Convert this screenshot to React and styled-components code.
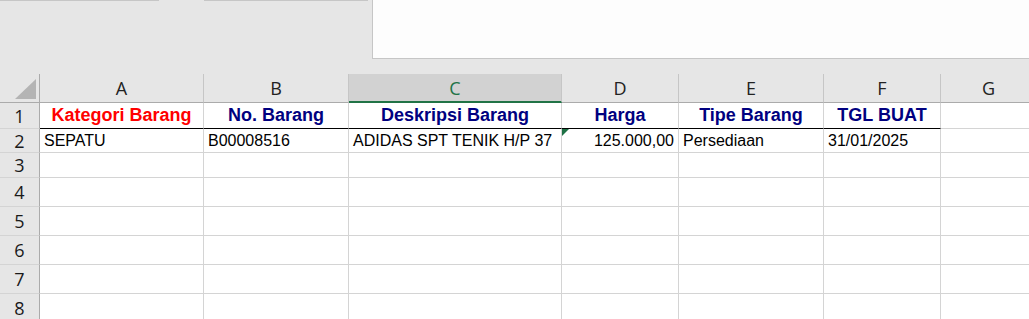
import React from "react";
import styled, { createGlobalStyle } from "styled-components";

const Global = createGlobalStyle`
  html, body { margin: 0; padding: 0; background: #ffffff; }
  body { width: 1029px; height: 319px; overflow: hidden; }
`;

const Page = styled.div`
  width: 1029px;
  height: 319px;
  overflow: hidden;
  display: flex;
  flex-direction: column;
  background: #ffffff;
`;

const TopArea = styled.div`
  height: 74px;
  background: #e6e6e6;
  display: flex;
  align-items: flex-start;
  flex-shrink: 0;
`;

const TopSegment = styled.div`
  width: ${(p) => p.$w}px;
  height: 1px;
  background: ${(p) => (p.$line ? "#c6c6c6" : "transparent")};
  flex-shrink: 0;
`;

const Panel = styled.div`
  flex: 1;
  height: 59px;
  box-sizing: border-box;
  background: #fdfdfd;
  border-left: 1px solid #c6c6c6;
  border-bottom: 1px solid #c6c6c6;
`;

const Sheet = styled.div`
  display: grid;
  grid-template-columns: 40px 164px 145px 213px 117px 145px 117px 96px;
  grid-template-rows: 29px 26px 24px 25px 29px 29px 29px 29px 29px;
`;

const Corner = styled.div`
  background: #e6e6e6;
  box-sizing: border-box;
  border-right: 1px solid #ababab;
  border-bottom: 1px solid #ababab;
  display: flex;
  align-items: flex-end;
  justify-content: flex-end;
  padding: 0 3px 3px 0;
`;

const CornerTriangle = styled.div`
  width: 0;
  height: 0;
  border-left: 21px solid transparent;
  border-bottom: 20px solid #b4b4b4;
`;

const ColHead = styled.div`
  background: ${(p) => (p.$sel ? "#d2d2d2" : "#e6e6e6")};
  box-sizing: border-box;
  border-right: 1px solid #c6c6c6;
  border-bottom: ${(p) => (p.$sel ? "2px solid #217346" : "1px solid #ababab")};
  display: flex;
  align-items: center;
  justify-content: center;
  padding-top: ${(p) => (p.$sel ? "1px" : "0")};
  font-family: "Open Sans", "Noto Sans", sans-serif;
  font-size: 18px;
  color: ${(p) => (p.$sel ? "#217346" : "#222222")};
`;

const RowHead = styled.div`
  background: #e6e6e6;
  box-sizing: border-box;
  border-right: 1px solid #ababab;
  border-bottom: 1px solid #d4d4d4;
  display: flex;
  align-items: center;
  justify-content: center;
  font-family: "Open Sans", "Noto Sans", sans-serif;
  font-size: 18px;
  color: #1a1a1a;
`;

const Cell = styled.div`
  position: relative;
  box-sizing: border-box;
  border-right: 1px solid #d4d4d4;
  border-bottom: 1px solid ${(p) => (p.$thick ? "#000000" : "#d4d4d4")};
  display: flex;
  align-items: center;
  justify-content: ${(p) =>
    p.$align === "center" ? "center" : p.$align === "right" ? "flex-end" : "flex-start"};
  padding: 0 4px 0 4px;
  font-family: "Liberation Sans", Arial, sans-serif;
  font-size: ${(p) => (p.$bold ? "18px" : "16px")};
  font-weight: ${(p) => (p.$bold ? 700 : 400)};
  color: ${(p) => p.$color || "#000000"};
  white-space: nowrap;
  overflow: visible;
`;

const ErrorMark = styled.span`
  position: absolute;
  left: 0;
  top: 0;
  width: 0;
  height: 0;
  border-top: 7px solid #1e7145;
  border-right: 7px solid transparent;
`;

const columns = ["A", "B", "C", "D", "E", "F", "G"];

const headerRow = [
  { text: "Kategori Barang", color: "#ff0000" },
  { text: "No. Barang", color: "#000080" },
  { text: "Deskripsi Barang", color: "#000080" },
  { text: "Harga", color: "#000080" },
  { text: "Tipe Barang", color: "#000080" },
  { text: "TGL BUAT", color: "#000080" },
];

const dataRow = [
  { text: "SEPATU" },
  { text: "B00008516" },
  { text: "ADIDAS SPT TENIK H/P 37" },
  { text: "125.000,00", align: "right", mark: true },
  { text: "Persediaan" },
  { text: "31/01/2025" },
];

export default function App() {
  const rows = [1, 2, 3, 4, 5, 6, 7, 8];
  return (
    <Page>
      <Global />
      <TopArea>
        <TopSegment $w={159} $line />
        <TopSegment $w={45} />
        <TopSegment $w={164} $line />
        <TopSegment $w={4} />
        <Panel />
      </TopArea>
      <Sheet>
        <Corner>
          <CornerTriangle />
        </Corner>
        {columns.map((c) => (
          <ColHead key={c} $sel={c === "C"}>
            {c}
          </ColHead>
        ))}
        {rows.map((r) => (
          <React.Fragment key={r}>
            <RowHead>{r}</RowHead>
            {columns.map((c, i) => {
              if (r === 1 && i < 6) {
                const h = headerRow[i];
                return (
                  <Cell key={c} $bold $thick $align="center" $color={h.color}>
                    {h.text}
                  </Cell>
                );
              }
              if (r === 2 && i < 6) {
                const d = dataRow[i];
                return (
                  <Cell key={c} $align={d.align}>
                    {d.mark && <ErrorMark />}
                    {d.text}
                  </Cell>
                );
              }
              return <Cell key={c} />;
            })}
          </React.Fragment>
        ))}
      </Sheet>
    </Page>
  );
}
